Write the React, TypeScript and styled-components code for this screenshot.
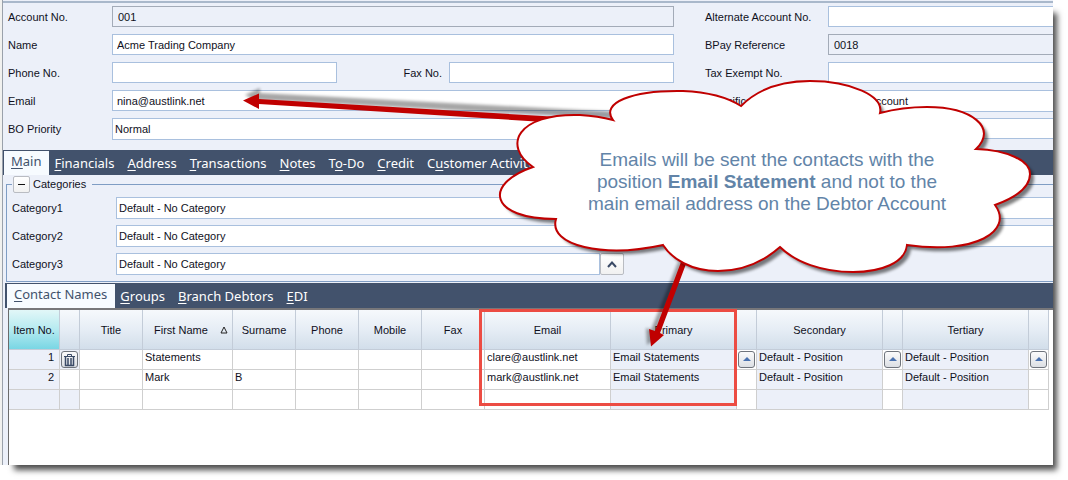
import React from "react";
import styled, { createGlobalStyle, css } from "styled-components";

const color = {
  panel: "#ecf0f9",
  bar: "#42526c",
  active: "#f7fbff",
  line: "#a9c0de",
  readOnlyLine: "#a3abb8",
  frame: "#7f9dc4",
  cell: "#cfcfcf",
  red: "#c00000",
  text: "#10101c",
};

const GlobalStyle = createGlobalStyle`
  *, *::before, *::after { box-sizing: border-box; }
  body {
    margin: 0;
    background: #fff;
    color: ${color.text};
    font: 11px/14px "Liberation Sans", Arial, sans-serif;
    overflow: hidden;
  }
  button, input, select { font: inherit; color: inherit; margin: 0; }
`;

const Page = styled.div`
  padding: 0 15px 15px 0;
`;

const Window = styled.main`
  position: relative;
  display: flex;
  flex-direction: column;
  background: #f1f1ef;
  padding-left: 2px;
  &::before {
    content: "";
    position: absolute;
    inset: 10px 0 0 12px;
    z-index: -1;
    box-shadow: 3px 4px 6px 1px rgba(0, 0, 0, 0.7);
  }
`;

const Panel = styled.div`
  border-left: 1px solid #9aa1ab;
  background: ${color.panel};
  overflow: hidden;
`;

const Form = styled.form`
  display: grid;
  grid-template-columns: 666fr 350fr;
  column-gap: 31px;
  margin-top: 1px;
  margin-right: -2px;
  border-top: 2px solid #a9b8cb;
  padding: 3px 0 4px 5px;
`;

const Row = styled.div<{ $label: number }>`
  display: grid;
  grid-template-columns: ${(p) => p.$label}px minmax(0, 1fr);
  height: 28px;
  align-items: start;
`;

const Label = styled.label`
  line-height: 23px;
  white-space: nowrap;
`;

const PhoneRow = styled.div`
  display: grid;
  grid-template-columns: 1fr 112px 1fr;
`;

const FaxLabel = styled(Label)`
  text-align: right;
  padding-right: 7px;
`;

const TextInput = styled.input`
  width: 100%;
  min-width: 0;
  height: 21px;
  border: 1px solid ${color.line};
  border-radius: 0;
  background: #fff;
  padding: 0 4px;
  outline: 0;
  &:read-only {
    background: transparent;
    border-color: ${color.readOnlyLine};
    padding: 0 5px;
  }
`;

const Select = styled.select`
  appearance: none;
  width: 100%;
  min-width: 0;
  height: 22px;
  border: 1px solid ${color.line};
  border-radius: 0;
  background: #fff;
  padding: 0 2px;
  outline: 0;
`;

const TabBar = styled.div<{ $nested?: boolean }>`
  display: flex;
  height: 25px;
  background: ${color.bar};
  padding-left: 1px;
  ${(p) =>
    p.$nested &&
    css`
      margin-left: 2px;
      padding-left: 2px;
    `}
`;

const Tab = styled.button<{ $active?: boolean }>`
  border: 0;
  background: none;
  color: #fff;
  font: 13px/24px "Noto Sans", Verdana, sans-serif;
  padding: 0 8px 0 5px;
  white-space: nowrap;
  u {
    text-underline-offset: 2px;
    text-decoration-skip-ink: none;
  }
  ${(p) =>
    p.$active &&
    css`
      margin-top: 1px;
      padding: 0 8px 3px 7px;
      background: ${color.active};
      color: ${color.bar};
      line-height: 21px;
    `}
`;

const Categories = styled.fieldset`
  margin: 0 -2px 1px 3px;
  border: 1px solid ${color.frame};
  padding: 4px 0 0 5px;
  min-width: 0;
`;

const Legend = styled.legend`
  display: flex;
  gap: 3px;
  padding: 1px 6px 0 1px;
  line-height: 17px;
`;

const SmallButton = styled.button`
  display: grid;
  place-items: center;
  width: 17px;
  height: 17px;
  border: 1px solid #b9bcc2;
  border-radius: 2px;
  background: linear-gradient(#fff, #f1f1f1);
  padding: 0;
`;

const PickerButton = styled(SmallButton)`
  width: 24px;
  height: 22px;
`;

const ShortPicker = styled.div`
  display: grid;
  grid-template-columns: 484px 24px;
`;

const Grid = styled.div`
  margin-left: 5px;
  min-height: 157px;
  background: #fff;
  border-top: 2px solid #77777a;
  border-left: 1px solid #6b6b6b;
`;

const Table = styled.table`
  width: 1040px;
  table-layout: fixed;
  border-collapse: separate;
  border-spacing: 0;
`;

const HeaderCell = styled.th<{ $current?: boolean }>`
  height: 40px;
  padding: 0 2px;
  border-right: 1px solid #c3ccd8;
  border-bottom: 1px solid #c3ccd8;
  background: ${(p) =>
    p.$current
      ? "linear-gradient(#e2f7f8, #b5eaf0 50%, #79d6e4)"
      : "linear-gradient(#f6f9fc, #e6edf5 50%, #d2deea)"};
  font-weight: normal;
  text-align: center;
  white-space: nowrap;
`;

const SortHeader = styled.span`
  display: flex;
  align-items: center;
  justify-content: space-between;
  padding: 0 2px 0 9px;
`;

const Cell = styled.td<{ $tinted?: boolean; $right?: boolean }>`
  height: 20px;
  padding: 0 2px 4px;
  border-right: 1px solid ${color.cell};
  border-bottom: 1px solid ${color.cell};
  background: ${(p) => (p.$tinted ? color.panel : "#fff")};
  line-height: 15px;
  white-space: nowrap;
  ${(p) =>
    p.$right &&
    css`
      text-align: right;
      padding-right: 5px;
    `}
`;

const ButtonCell = styled(Cell)`
  padding: 1px 1px 0;
  vertical-align: top;
`;

const CellButton = styled(SmallButton)`
  border-color: #6f747c;
  border-radius: 3px;
  background: linear-gradient(#fbfbfb, #dcdfe4);
`;

const ArrowButton = styled(CellButton)`
  padding-bottom: 2px;
`;

const Highlight = styled.div`
  position: absolute;
  left: 479px;
  top: 309px;
  width: 258px;
  height: 97px;
  border: 3px solid #ec4c43;
`;

const Drawing = styled.svg`
  position: absolute;
  left: 0;
  top: 0;
  pointer-events: none;
  overflow: visible;
`;

const Callout = styled.p`
  position: absolute;
  left: 567px;
  top: 149px;
  width: 400px;
  margin: 0;
  color: #6284a8;
  font-size: 19px;
  line-height: 22px;
  text-align: center;
`;

const cloud =
  "M533 167 C502 146 517 113 580 115 Q598 116 613 120 C600 103 632 90 683 91 C706 92 727 97 741 106 " +
  "C758 89 783 81 810 81 C851 81 884 96 880 113 C895 109 910 107 927 107 C972 107 998 128 976 149 " +
  "C1008 150 1030 161 1030 174 C1030 187 1017 197 995 205 C1014 231 975 255 907 245 " +
  "C905 263 881 272 853 272 C822 272 795 262 780 247 C763 262 742 271 718 271 C691 271 672 259 663 245 " +
  "C604 258 548 246 556 219 C489 219 483 184 533 167 Z";

type TabSpec = [before: string, key: string, after: string];

const mainTabs: TabSpec[] = [
  ["", "M", "ain"],
  ["", "F", "inancials"],
  ["", "A", "ddress"],
  ["", "T", "ransactions"],
  ["", "N", "otes"],
  ["T", "o", "-Do"],
  ["", "C", "redit"],
  ["C", "u", "stomer Activity"],
];

const contactTabs: TabSpec[] = [
  ["", "C", "ontact Names"],
  ["", "G", "roups"],
  ["", "B", "ranch Debtors"],
  ["", "E", "DI"],
];

const columnWidths = [51, 20, 63, 90, 63, 63, 63, 63, 126, 126, 20, 126, 20, 126, 20];

const contacts = [
  { no: "1", first: "Statements", last: "", email: "clare@austlink.net", primary: "Email Statements", other: "Default - Position", current: true },
  { no: "2", first: "Mark", last: "B", email: "mark@austlink.net", primary: "Email Statements", other: "Default - Position", current: false },
  { no: "", first: "", last: "", email: "", primary: "", other: "", current: false },
];

function Tabs({ label, tabs, nested }: { label: string; tabs: TabSpec[]; nested?: boolean }) {
  return (
    <TabBar role="tablist" aria-label={label} $nested={nested}>
      {tabs.map(([before, key, after], i) => (
        <Tab key={before + key + after} type="button" role="tab" aria-selected={i === 0} $active={i === 0}>
          {before}
          <u>{key}</u>
          {after}
        </Tab>
      ))}
    </TabBar>
  );
}

function Field({ id, label, value = "", width, readOnly }: { id: string; label: string; value?: string; width: number; readOnly?: boolean }) {
  return (
    <Row $label={width}>
      <Label htmlFor={id}>{label}</Label>
      <TextInput id={id} defaultValue={value} readOnly={readOnly} />
    </Row>
  );
}

function Choice({ id, label, value, width }: { id: string; label: string; value: string; width: number }) {
  return (
    <Row $label={width}>
      <Label htmlFor={id}>{label}</Label>
      <Select id={id}>
        <option>{value}</option>
      </Select>
    </Row>
  );
}

function PickButton({ show, label }: { show: boolean; label: string }) {
  return (
    <ButtonCell>
      {show && (
        <ArrowButton type="button" aria-label={label}>
          <svg width="8" height="4" viewBox="0 0 8 4">
            <path d="M0 4 L4 0 L8 4 Z" fill="#4a72b0" />
          </svg>
        </ArrowButton>
      )}
    </ButtonCell>
  );
}

export default function App() {
  return (
    <Page>
      <GlobalStyle />
      <Window>
        <Panel>
          <Form>
            <div>
              <Field id="account" label="Account No." value="001" width={104} readOnly />
              <Field id="name" label="Name" value="Acme Trading Company" width={104} />
              <Row $label={104}>
                <Label htmlFor="phone">Phone No.</Label>
                <PhoneRow>
                  <TextInput id="phone" />
                  <FaxLabel htmlFor="fax">Fax No.</FaxLabel>
                  <TextInput id="fax" />
                </PhoneRow>
              </Row>
              <Field id="email" label="Email" value="nina@austlink.net" width={104} />
              <Choice id="priority" label="BO Priority" value="Normal" width={104} />
            </div>
            <div>
              <Field id="alternate" label="Alternate Account No." width={123} />
              <Field id="bpay" label="BPay Reference" value="0018" width={123} readOnly />
              <Field id="tax" label="Tax Exempt No." width={123} />
              <Choice id="classification" label="Classification" value="Default Account" width={123} />
              <Field id="extra" label="" width={123} />
            </div>
          </Form>

          <Tabs label="Debtor" tabs={mainTabs} />

          <Categories>
            <Legend>
              <SmallButton type="button" aria-label="Collapse categories">
                <svg width="7" height="1" viewBox="0 0 7 1">
                  <path d="M0 0 H7 V1 H0 Z" fill="#111" />
                </svg>
              </SmallButton>
              Categories
            </Legend>
            <Choice id="category1" label="Category1" value="Default - No Category" width={104} />
            <Choice id="category2" label="Category2" value="Default - No Category" width={104} />
            <Row $label={104}>
              <Label htmlFor="category3">Category3</Label>
              <ShortPicker>
                <Select id="category3">
                  <option>Default - No Category</option>
                </Select>
                <PickerButton type="button" aria-label="Pick category">
                  <svg width="10" height="7" viewBox="0 0 10 7">
                    <path d="M1 6 L5 1.5 L9 6" fill="none" stroke="#3a4a66" strokeWidth="2" />
                  </svg>
                </PickerButton>
              </ShortPicker>
            </Row>
          </Categories>

          <Tabs label="Contacts" tabs={contactTabs} nested />

          <Grid>
            <Table>
              <colgroup>
                {columnWidths.map((w, i) => (
                  <col key={i} width={w} />
                ))}
              </colgroup>
              <thead>
                <tr>
                  <HeaderCell $current>Item No.</HeaderCell>
                  <HeaderCell />
                  <HeaderCell>Title</HeaderCell>
                  <HeaderCell aria-sort="ascending">
                    <SortHeader>
                      First Name
                      <svg width="8" height="8" viewBox="0 0 8 8">
                        <path d="M1 7 L4 1 L7 7 Z" fill="none" stroke="#222" />
                      </svg>
                    </SortHeader>
                  </HeaderCell>
                  <HeaderCell>Surname</HeaderCell>
                  <HeaderCell>Phone</HeaderCell>
                  <HeaderCell>Mobile</HeaderCell>
                  <HeaderCell>Fax</HeaderCell>
                  <HeaderCell>Email</HeaderCell>
                  <HeaderCell>Primary</HeaderCell>
                  <HeaderCell />
                  <HeaderCell>Secondary</HeaderCell>
                  <HeaderCell />
                  <HeaderCell>Tertiary</HeaderCell>
                  <HeaderCell />
                </tr>
              </thead>
              <tbody>
                {contacts.map((c) => (
                  <tr key={c.no}>
                    <Cell $tinted $right>{c.no}</Cell>
                    <ButtonCell $tinted={c.no !== "2"}>
                      {c.current && (
                        <CellButton type="button" aria-label="Delete contact">
                          <svg width="13" height="14" viewBox="0 0 13 14" fill="none" stroke="#3a4a66">
                            <path d="M1 3.5 H12 M4.5 3 V1.5 H8.5 V3" />
                            <path d="M2.5 4 V12.5 H10.5 V4 M5 5 V12 M8 5 V12" strokeWidth="1.5" />
                          </svg>
                        </CellButton>
                      )}
                    </ButtonCell>
                    <Cell />
                    <Cell>{c.first}</Cell>
                    <Cell>{c.last}</Cell>
                    <Cell />
                    <Cell />
                    <Cell />
                    <Cell>{c.email}</Cell>
                    <Cell $tinted>{c.primary}</Cell>
                    <PickButton show={c.current} label="Pick primary position" />
                    <Cell $tinted>{c.other}</Cell>
                    <PickButton show={c.current} label="Pick secondary position" />
                    <Cell $tinted>{c.other}</Cell>
                    <PickButton show={c.current} label="Pick tertiary position" />
                  </tr>
                ))}
              </tbody>
            </Table>
          </Grid>
        </Panel>

        <Highlight />
        <Drawing width="1053" height="465" viewBox="0 0 1053 465" aria-hidden="true">
          <defs>
            <filter id="soft" x="-20%" y="-60%" width="140%" height="220%">
              <feGaussianBlur stdDeviation="1.5" />
            </filter>
          </defs>
          <g filter="url(#soft)" opacity="0.35">
            <path d="M245 95 L260 88 V93 L620 112 V119 L260 100 V103 Z" fill="#000" />
            <path d="M647 345 L646 328 L651 330 L678 262 L682 264 L656 332 L661 335 Z" fill="#000" />
          </g>
          <path d="M243 100.5 L259 93.5 V99 L560 117 V123 L259 104 V109 Z" fill={color.red} />
          <path d="M651 346.5 L649 329 L655 331 L681 262 L686 264 L660 333 L664 335 Z" fill={color.red} />
          <path d={cloud} transform="translate(4 4)" fill="#000" opacity="0.5" filter="url(#soft)" />
          <path d={cloud} fill="#fff" stroke={color.red} strokeWidth="2" />
        </Drawing>
        <Callout>
          Emails will be sent the contacts with the
          <br />
          position <b>Email Statement</b> and not to the
          <br />
          main email address on the Debtor Account
        </Callout>
      </Window>
    </Page>
  );
}
